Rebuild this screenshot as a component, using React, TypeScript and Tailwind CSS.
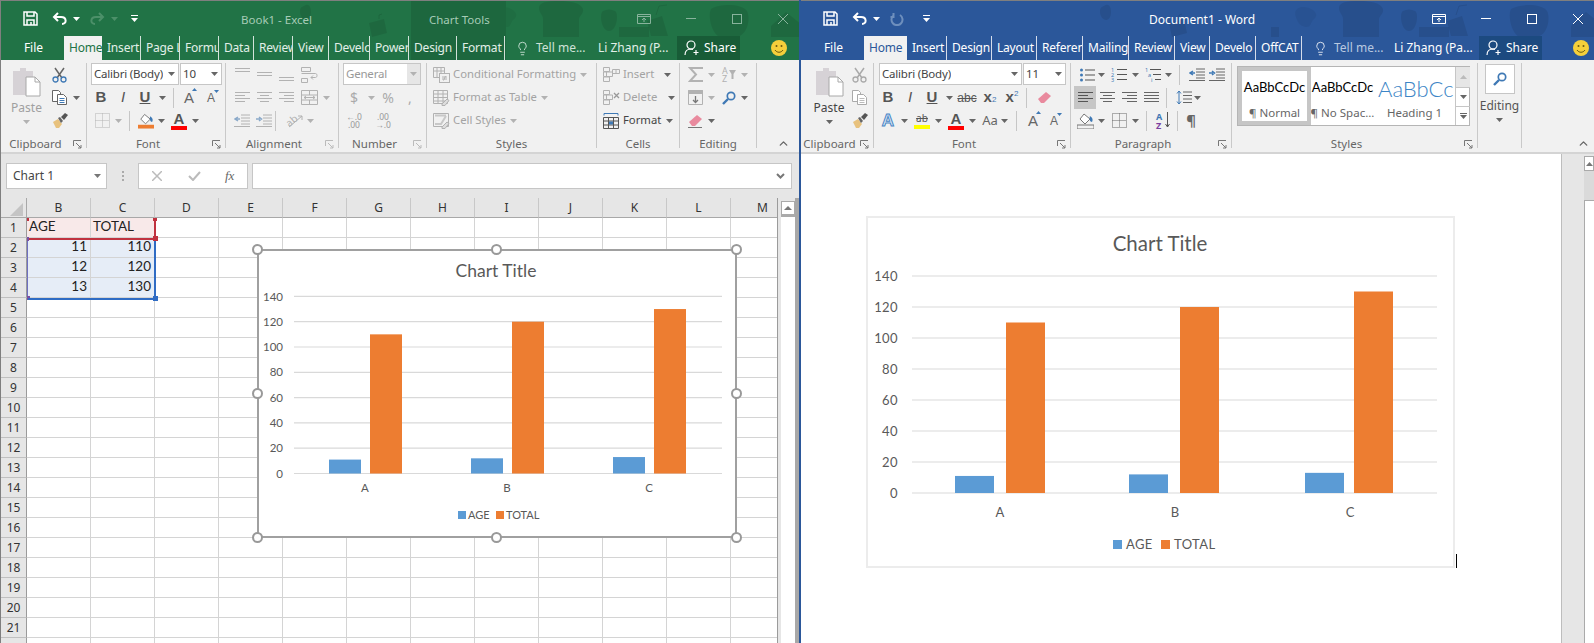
import { ReactNode } from "react";
import { ChevronUp, Lightbulb } from "lucide-react";
import clsx from "clsx";

const GREY = "#b2b2b2";
const DARK = "#666666";

const Caret = ({ c = DARK }: { c?: string }) => (
  <svg width="7" height="4" viewBox="0 0 7 4"><path d="M0 0h7L3.5 4z" fill={c} /></svg>
);

const Cell = ({ className, children }: { className?: string; children?: ReactNode }) => (
  <div className={clsx("flex h-[22px] shrink-0 items-center justify-center", className)}>{children}</div>
);

const Sep = ({ className }: { className?: string }) => <div className={clsx("h-[20px] w-px shrink-0 bg-[#c6c6c6]", className)} />;

const Row = ({ className, children }: { className?: string; children?: ReactNode }) => (
  <div className={clsx("flex h-[23px] items-center", className)}>{children}</div>
);

const Launcher = ({ c = "#777" }: { c?: string }) => (
  <svg className="absolute bottom-[-1px] right-[4px]" width="9" height="9" viewBox="0 0 9 9" fill="none" stroke={c}>
    <path d="M.5 6V.5H8M3 3l5 5M8 5v3H5" />
  </svg>
);

const Group = ({ className, label, launcher = true, dim, children }: { className: string; label: string; launcher?: boolean; dim?: boolean; children?: ReactNode }) => (
  <div className={clsx("relative mt-[3px] flex h-[85px] shrink-0 flex-col border-r border-[#c9c9c9]", className)}>
    <div className="h-[74px] shrink-0">{children}</div>
    <div className={clsx("shrink-0 text-center text-[11.5px] leading-[14px] text-[#666]", launcher && "pr-[16px]")}>{label}</div>
    {launcher && <Launcher c={dim ? "#bbb" : "#777"} />}
  </div>
);

const Combo = ({ className, text, c = "#444", arrow = DARK, boxed }: { className: string; text: string; c?: string; arrow?: string; boxed?: boolean }) => (
  <div className={clsx("flex h-[22px] shrink-0 items-center justify-between border border-[#c6c6c6] bg-white pl-[2px] font-['Noto_Sans',sans-serif] text-[11.5px] tracking-[-0.2px]", className)} style={{ color: c }}>
    <span className="overflow-hidden whitespace-nowrap">{text}</span>
    <span className={clsx("flex h-full w-[13px] shrink-0 items-center justify-center", boxed && "bg-[#e6e6e6]")}><Caret c={arrow} /></span>
  </div>
);

/* ---------- icons ---------- */
const Save = ({ c }: { c: string }) => (
  <svg width="15" height="15" viewBox="0 0 15 15" fill="none" stroke={c} strokeWidth="1.5">
    <path d="M1 1h11l2 2v11H1z" /><path d="M4 1v4h7V1M4 14V9h7v5" /><path d="M8 11v3" />
  </svg>
);
const Undo = ({ c }: { c: string }) => (
  <svg width="15" height="13" viewBox="0 0 15 13" fill="none" stroke={c} strokeWidth="2">
    <path d="M6 1 2 5l4 4M2 5h7c6 0 6 7 1 7" />
  </svg>
);
const Redo = ({ c }: { c: string }) => (
  <svg width="15" height="13" viewBox="0 0 15 13" fill="none" stroke={c} strokeWidth="2">
    <path d="m9 1 4 4-4 4M13 5H6c-6 0-6 7-1 7" />
  </svg>
);
const Repeat = ({ c }: { c: string }) => (
  <svg width="14" height="14" viewBox="0 0 14 14" fill="none" stroke={c} strokeWidth="2">
    <path d="M4 3a5.5 5.5 0 1 0 6 0M3.5 1v4h-3" />
  </svg>
);
const QatMore = () => (
  <svg width="7" height="7" viewBox="0 0 7 7" fill="#fff"><path d="M0 0h7v1H0zM0 3h7L3.5 7z" /></svg>
);
const Paste = ({ c = "#d6d2d6" }: { c?: string }) => (
  <svg width="29" height="30" viewBox="0 0 29 30">
    <path d="M1 4h7V1h6v3h7v24H1z" fill={c} />
    <path d="M14 10h9l5 5v14H14z" fill="#fff" stroke="#a8a8a8" />
    <path d="M23 10v5h5" fill="none" stroke="#a8a8a8" />
  </svg>
);
const Scissors = ({ c, h }: { c: string; h: string }) => (
  <svg width="15" height="16" viewBox="0 0 15 16" fill="none">
    <path d="M3 1l7 10M12 1 5 11" stroke={c} strokeWidth="1.5" />
    <circle cx="3.5" cy="12.5" r="2.5" stroke={h} strokeWidth="1.3" /><circle cx="11.5" cy="12.5" r="2.5" stroke={h} strokeWidth="1.3" />
  </svg>
);
const Copy = ({ c, a = "#3f79b5" }: { c: string; a?: string }) => (
  <svg width="15" height="15" viewBox="0 0 15 15" fill="#fff" stroke={c}>
    <path d="M.5.5h6l2 2v9h-8z" /><path d="M5.5 4.5h6l3 3v7h-9z" />
    <path d="M7.5 8.5h5M7.5 10.5h5M7.5 12.5h5" stroke={a} />
  </svg>
);
const Painter = () => (
  <svg width="16" height="16" viewBox="0 0 16 16">
    <path d="M1 9 6 6l4 5-3 4H4z" fill="#e8c27e" /><path d="m6 5 2-1 3 4-2 2z" fill="#666" /><path d="m9 4 4-4 3 2-4 5z" fill="#555" />
  </svg>
);
const Dotted = ({ c }: { c: string }) => (
  <svg width="15" height="15" viewBox="0 0 15 15" fill="none" stroke={c} strokeDasharray="1 1"><path d="M.5.5h14v14H.5zM7.5.5v14M.5 7.5h14" /></svg>
);
const Bucket = ({ bar }: { bar: string }) => (
  <svg width="17" height="16" viewBox="0 0 17 16">
    <path d="m7 1 6 5-5 5-5-5z" fill="#fff" stroke="#777" /><path d="M13 3c3 2 3 4 2 6-2 0-3-3-2-6z" fill="#3f79b5" />
    <rect y="12" width="17" height="4" fill={bar} stroke={bar === "#f1f1f1" ? "#777" : "none"} />
  </svg>
);
const LetterBar = ({ bar, c = "#555" }: { bar: string; c?: string }) => (
  <div className="flex w-[16px] flex-col items-center">
    <span className="font-['Liberation_Sans',sans-serif] text-[15px] font-bold leading-[13px]" style={{ color: c }}>A</span>
    <span className="mt-[1px] h-[4px] w-[16px]" style={{ background: bar }} />
  </div>
);
const Grow = ({ up, big }: { up: boolean; big: boolean }) => (
  <div className="relative flex w-[16px] justify-center">
    <span className={clsx("font-['Liberation_Sans',sans-serif] leading-none text-[#666]", big ? "text-[15px]" : "text-[12px]")}>A</span>
    <svg className="absolute right-0 top-[-2px]" width="5" height="3" viewBox="0 0 5 3"><path d={up ? "M0 3h5L2.5 0z" : "M0 0h5L2.5 3z"} fill="#3f79b5" /></svg>
  </div>
);
const Lines = ({ c, rows }: { c: string; rows: [number, number, number][] }) => (
  <svg width="15" height="15" viewBox="0 0 15 15" fill={c}>
    {rows.map(([y, x, w]) => <rect key={y} x={x} y={y} width={w} height="1" />)}
  </svg>
);
const L_TOP: [number, number, number][] = [[1, 0, 15], [4, 0, 15]];
const L_MID: [number, number, number][] = [[5, 0, 15], [8, 0, 15]];
const L_BOT: [number, number, number][] = [[10, 0, 15], [13, 0, 15]];
const L_LEFT: [number, number, number][] = [[2, 0, 15], [5, 0, 10], [8, 0, 15], [11, 0, 10]];
const L_CENTER: [number, number, number][] = [[2, 0, 15], [5, 3, 9], [8, 0, 15], [11, 3, 9]];
const L_RIGHT: [number, number, number][] = [[2, 0, 15], [5, 5, 10], [8, 0, 15], [11, 5, 10]];
const L_JUST: [number, number, number][] = [[2, 0, 15], [5, 0, 15], [8, 0, 15], [11, 0, 15]];
const Wrap = ({ c }: { c: string }) => (
  <svg width="17" height="16" viewBox="0 0 17 16" fill="none" stroke={c}><path d="M.5.5h9v4h-9zM.5 6.5h14c2 0 2 4 0 4H10m2-2-2 2 2 2M.5 11.5h6v4h-6z" /></svg>
);
const Merge = ({ c }: { c: string }) => (
  <svg width="17" height="15" viewBox="0 0 17 15" fill="none" stroke={c}><path d="M.5.5h16v14H.5zM.5 5h16M.5 10h16M8.5.5V5M8.5 10v4.5M3 7.5h11M5 6 3 7.5 5 9M12 6l2 1.5L12 9" /></svg>
);
const Indent = ({ c, a = "#8aa9c9", inc }: { c: string; a?: string; inc?: boolean }) => (
  <svg width="16" height="13" viewBox="0 0 16 13" fill="none">
    <path d="M7 1h9M7 4h9M7 7h9M7 10h9M0 12.5h16" stroke={c} />
    <path d={inc ? "M0 5h4M3 3l2.5 2L3 7" : "M6 5H2M4 3 1 5l3 2"} stroke={a} strokeWidth="1.5" />
  </svg>
);
const Orient = ({ c }: { c: string }) => (
  <svg width="18" height="15" viewBox="0 0 18 15" fill="none" stroke={c}>
    <text x="0" y="11" fontSize="10" fill={c} stroke="none" transform="rotate(-40 6 8)">ab</text>
    <path d="M3 14 16 3m-4 0h4v4" />
  </svg>
);
const Cond = ({ c, a }: { c: string; a: string }) => (
  <svg width="17" height="16" viewBox="0 0 17 16" fill="none" stroke={c}>
    <path d="M.5.5h11v10H.5zM.5 4h11M4 .5v10M8 .5v10" /><rect x="6.5" y="6.5" width="10" height="9" fill="#f1f1f1" />
    <path d="M9 10h5M9 12h5M12.5 9l-2 4.5" stroke={a} />
  </svg>
);
const TableI = ({ c }: { c: string }) => (
  <svg width="17" height="16" viewBox="0 0 17 16" fill="none" stroke={c}>
    <path d="M.5.5h14v13H.5zM.5 4h14M.5 7.5h14M.5 11h14M5 .5v13M10 .5v13" />
    <path d="m9 14 5-5 2 1.5-4 5H9z" fill="#ddd" />
  </svg>
);
const CellStyle = ({ c }: { c: string }) => (
  <svg width="17" height="16" viewBox="0 0 17 16" fill="none" stroke={c}>
    <path d="M.5.5h15v13H.5z" /><path d="M2 2.5h11M2 11h6L13 3" stroke="#c8c8c8" strokeWidth="2" />
    <path d="m9 14 5-5 2 1.5-4 5H9z" fill="#ddd" />
  </svg>
);
const CellsIc = ({ c, x }: { c: string; x?: boolean }) => (
  <svg width="17" height="15" viewBox="0 0 17 15" fill="none" stroke={c}>
    <path d="M.5.5h6v4h-6zM.5 5h9v4.500h-9zM.5 10h6v4.500h-6zM3.500 5v4.500" />
    {x ? <path d="m11 3 5 5m0-5-5 5" stroke="#999" strokeWidth="1.3" /> : <path d="M9.500 2.500h7v4h-7zM13 2.500v4" />}
  </svg>
);
const FormatCells = () => (
  <svg width="17" height="16" viewBox="0 0 17 16" fill="none" stroke="#555">
    <path d="M1 .5h14M1 .5v2M15 .5v2" stroke="#3f79b5" />
    <path d="M.5 4.500h15v11H.5zM.5 8h15M.5 12h15M5.500 4.500v11M10.500 4.500v11" />
    <rect x="6" y="8.5" width="4" height="3" fill="#3f79b5" stroke="none" />
  </svg>
);
const Sigma = ({ c }: { c: string }) => (
  <svg width="15" height="15" viewBox="0 0 15 15" fill="none" stroke={c} strokeWidth="2"><path d="M15 1H2l6 6.500L2 14h13" /></svg>
);
const SortAZ = ({ c }: { c: string }) => (
  <div className="relative h-[16px] w-[14px] text-[9px] leading-[8px]" style={{ color: c }}>
    <div>A</div><div>Z</div>
    <svg className="absolute right-0 top-[3px]" width="7" height="9" viewBox="0 0 7 9" fill={c}><path d="M0 0h7L4.5 4v5h-2V4z" /></svg>
  </div>
);
const FillDown = ({ c }: { c: string }) => (
  <svg width="15" height="15" viewBox="0 0 15 15" fill="none" stroke={c}><path d="M.5.5h14v14H.5z" /><path d="M.5.5h14v3H.5z" fill={c} /><path d="M7.5 6v6M5 10l2.500 2.500L10 10" stroke="#777" strokeWidth="1.3" /></svg>
);
const Find = () => (
  <svg width="14" height="14" viewBox="0 0 14 14" fill="none"><circle cx="9" cy="5" r="3.7" stroke="#3f79b5" strokeWidth="1.7" /><path d="M6 8 1 13" stroke="#3f79b5" strokeWidth="2.4" /></svg>
);
const Eraser = ({ line = true }: { line?: boolean }) => (
  <svg width="15" height="15" viewBox="0 0 15 15"><path d="m1 9 8-7 5 4-7 7H4z" fill="#e98a9e" />{line && <path d="M0 14.5h14" stroke="#777" />}</svg>
);
const Smiley = () => (
  <svg width="16" height="16" viewBox="0 0 16 16">
    <circle cx="8" cy="8" r="8" fill="#f5cf3b" /><circle cx="5.5" cy="6" r="1" fill="#6a5a10" /><circle cx="10.5" cy="6" r="1" fill="#6a5a10" />
    <path d="M4 10c2 3 6 3 8 0" fill="none" stroke="#6a5a10" />
  </svg>
);
const Person = () => (
  <svg width="16" height="16" viewBox="0 0 16 16" fill="none" stroke="#fff" strokeWidth="1.2">
    <circle cx="7" cy="5" r="4" /><path d="M1 15c0-4 2-6 6-6l2 .5M12 10v5M9.500 12.500h5" />
  </svg>
);
const Pattern = () => (
  <svg className="absolute left-0 top-0" width="800" height="36" viewBox="0 0 800 36" fill="#000" fillOpacity="0.09">
    <path d="M303 5c4-3 7 0 7 6s-3 8-5 8-6-3-6-8 2-5 4-6z" />
    <path d="M368 22l15-4 3 14-15 4z" /><path d="M378 18v-4l3-1" fill="none" stroke="#000" strokeOpacity=".1" />
    <path d="M496 8c5-4 15-1 18 3s0 6-2 8-2 7-6 7-8-2-10-7-3-8 0-11z" fillOpacity=".05" />
    <path d="M470 26h8v10h-8z" />
    <path d="M538 7c0-6 8-7 20-7s22 2 24 8c1 5-4 7-4 10v18h-36V18c0-4-4-6-4-11z" />
    <path d="M602 10c4-2 8-2 12 0s2 20-6 20-10-18-6-20z" />
    <path d="M646 20l15-5 6 20H650z" /><path d="M655 14l3-9 8-1" fill="none" stroke="#000" strokeOpacity=".09" />
    <path d="M618 26h30v10h-30z" />
    <path d="M710 8c8-5 30-6 36 2 4 8 0 26-12 26h-14c-8 0-14-20-10-28z" />
    <path d="M770 25l15-14 15 12v13h-30z" />
  </svg>
);
const DisplayMode = ({ c }: { c: string }) => (
  <svg width="14" height="10" viewBox="0 0 14 10" fill="none" stroke={c}><path d="M.5.5h13v9H.5zM.5 2.500h13M7 8V4M5 6l2-2 2 2" /></svg>
);

/* ---------- window frame ---------- */
const Tab = ({ className, label, active, color }: { className: string; label: string; active?: boolean; color?: string }) => (
  <div className={clsx("flex h-[24px] shrink-0 items-center overflow-hidden whitespace-nowrap pl-[5px] tracking-[-0.2px]", active ? "bg-[#f1f1f1]" : "", className)} style={active ? { color } : undefined}>
    {label}
  </div>
);

const Controls = ({ c }: { c: string }) => (
  <div className="flex items-center" style={{ color: c }}>
    <DisplayMode c={c} />
    <div className="ml-[35px] h-px w-[10px]" style={{ background: c }} />
    <div className="ml-[36px] h-[10px] w-[10px] border" style={{ borderColor: c }} />
    <svg className="ml-[36px]" width="10" height="10" viewBox="0 0 10 10" stroke={c}><path d="m0 0 10 10M10 0 0 10" /></svg>
  </div>
);

const Chevron = () => <ChevronUp size={13} strokeWidth={2.5} className="mt-[77px] shrink-0 text-[#666]" />;

/* ---------- chart ---------- */
type ChartProps = {
  w: number; h: number; x0: number; x1: number; y0: number; step: number; barW: number;
  bars: number[]; cats: number[]; axisX: number; catY: number; title: [number, number, number];
  legend: { y: number; sq: number; s: number; a: number; t: number; sq2: number; fs: number };
  fs: number; ls?: number;
};

const Chart = ({ w, h, x0, x1, y0, step, barW, bars, cats, axisX, catY, title, legend, fs, ls }: ChartProps) => {
  const age = [11, 12, 13];
  const total = [110, 120, 130];
  const unit = step / 20;
  return (
    <svg width={w} height={h} viewBox={`0 0 ${w} ${h}`} className="block font-['Lato',sans-serif]" fill="#595959">
      <text x={title[0]} y={title[1]} fontSize={title[2]} textAnchor="middle">Chart Title</text>
      {[0, 20, 40, 60, 80, 100, 120, 140].map((v, i) => (
        <g key={v}>
          <line x1={x0} x2={x1} y1={y0 - i * step} y2={y0 - i * step} stroke="#d9d9d9" strokeWidth="1.2" />
          <text x={axisX} y={y0 - i * step + fs * 0.36} fontSize={fs} textAnchor="end" letterSpacing={ls}>{v}</text>
        </g>
      ))}
      {[0, 1, 2].map((i) => (
        <g key={i}>
          <rect x={bars[i * 2]} y={y0 - age[i] * unit} width={barW} height={age[i] * unit} fill="#5b9bd5" />
          <rect x={bars[i * 2 + 1]} y={y0 - total[i] * unit} width={barW} height={total[i] * unit} fill="#ed7d31" />
          <text x={cats[i]} y={catY} fontSize={fs} textAnchor="middle">{"ABC"[i]}</text>
        </g>
      ))}
      <rect x={legend.sq} y={legend.y - legend.s} width={legend.s} height={legend.s} fill="#5b9bd5" />
      <text x={legend.a} y={legend.y} fontSize={legend.fs} letterSpacing={ls}>AGE</text>
      <rect x={legend.sq2} y={legend.y - legend.s} width={legend.s} height={legend.s} fill="#ed7d31" />
      <text x={legend.t} y={legend.y} fontSize={legend.fs} letterSpacing={ls}>TOTAL</text>
    </svg>
  );
};

const Handle = ({ className }: { className: string }) => (
  <div className={clsx("absolute h-[11px] w-[11px] rounded-full border-2 border-[#999] bg-white", className)} />
);

/* ---------- Excel ---------- */
const COLS = ["B", "C", "D", "E", "F", "G", "H", "I", "J", "K", "L", "M"];
const ROWS = Array.from({ length: 22 }, (_, i) => i + 1);
const DATA: Record<string, string> = { B1: "AGE", C1: "TOTAL", B2: "11", C2: "110", B3: "12", C3: "120", B4: "13", C4: "130" };

const Mark = ({ className }: { className: string }) => <div className={clsx("absolute", className)} />;

const Sheet = () => (
  <div className="relative h-full w-[777px] shrink-0 overflow-hidden border-r border-[#9b9b9b] bg-white font-['Lato',sans-serif] text-[13.5px] text-[#222]">
    <div className="grid grid-cols-[26px_repeat(12,64px)] grid-rows-[20px] auto-rows-[20px]">
      <div className="relative border-b border-r border-[#a8a8a8] bg-[#e6e6e6]">
        <svg className="absolute bottom-[1px] right-[3px]" width="13" height="13" viewBox="0 0 13 13"><path d="M13 0v13H0z" fill="#c4c4c4" /></svg>
      </div>
      {COLS.map((c) => (
        <div key={c} className="flex items-center justify-center border-b border-r border-b-[#a8a8a8] border-r-[#c8c8c8] bg-[#e6e6e6] font-['Noto_Sans',sans-serif] text-[12px] text-[#333]">{c}</div>
      ))}
      {ROWS.map((r) => (
        <div key={r} className="contents">
          <div className="flex items-center justify-center border-b border-r border-b-[#c0c0c0] border-r-[#9b9b9b] bg-[#e6e6e6] font-['Noto_Sans',sans-serif] text-[12px] text-[#333]">{r}</div>
          {COLS.map((c) => {
            const key = `${c}${r}`;
            const picked = (c === "B" || c === "C") && r <= 4;
            return (
              <div
                key={key}
                className={clsx(
                  "flex items-center overflow-hidden border-b border-r border-[#d4d4d4] pb-px pl-[2px] pr-[3px] leading-none",
                  r > 1 && "justify-end",
                  picked && (r === 1 ? "bg-[#f8e9e9]" : "bg-[#e6edf7]"),
                )}
              >
                {DATA[key]}
              </div>
            );
          })}
        </div>
      ))}
    </div>

    {/* range highlight */}
    <Mark className="left-[26px] top-[40px] h-[2px] w-[127px] bg-[#c0323f]" />
    <Mark className="left-[153px] top-[20px] h-[21px] w-[2px] bg-[#c0323f]" />
    <Mark className="left-[152px] top-[38px] h-[5px] w-[5px] bg-[#c0323f]" />
    <Mark className="left-[152px] top-[20px] h-[3px] w-[4px] bg-[#c0323f]" />
    <Mark className="left-[26px] top-[20px] h-[3px] w-[2px] bg-[#c0323f]" />
    <Mark className="left-[26px] top-[42px] h-[58px] w-px bg-[#6f6fc0]" />
    <Mark className="left-[26px] top-[39px] h-[4px] w-[2px] bg-[#7a4fa0]" />
    <Mark className="left-[26px] top-[98px] h-[4px] w-[3px] bg-[#7a4fa0]" />
    <Mark className="left-[153px] top-[43px] h-[57px] w-[2px] bg-[#2f6cc4]" />
    <Mark className="left-[27px] top-[100px] h-[2px] w-[127px] bg-[#2f6cc4]" />
    <Mark className="left-[152px] top-[98px] h-[5px] w-[5px] bg-[#2f6cc4]" />

    {/* chart sits on top of the cells */}
    <div className="absolute left-[256px] top-[51px] h-[289px] w-[480px] border-2 border-[#a0a0a0] bg-white">
      <div className="-m-[2px]">
        <Chart
          w={480} h={287} x0={37} x1={465} y0={224.5} step={25.3} barW={32}
          bars={[72, 113, 214, 255, 356, 397]} cats={[108, 250, 392]} axisX={26} catY={243}
          title={[239, 28, 17.5]} fs={11.5}
          legend={{ y: 270, s: 8, sq: 201, a: 211, sq2: 239, t: 249, fs: 11 }}
        />
      </div>
      <Handle className="-left-[7px] -top-[7px]" />
      <Handle className="left-[232px] -top-[7px]" />
      <Handle className="-right-[7px] -top-[7px]" />
      <Handle className="-left-[7px] top-[137px]" />
      <Handle className="-right-[7px] top-[137px]" />
      <Handle className="-bottom-[7px] -left-[7px]" />
      <Handle className="-bottom-[7px] left-[232px]" />
      <Handle className="-bottom-[7px] -right-[7px]" />
    </div>
  </div>
);

const ExcelRibbon = () => (
  <div className="flex h-[94px] shrink-0 border-b-2 border-[#d4d4d4] bg-[#f1f1f1]">
    <Group className="w-[86px]" label="Clipboard">
      <div className="flex">
        <div className="flex w-[51px] shrink-0 flex-col items-center pt-[4px]">
          <Paste />
          <div className="mt-[2px] text-[12px] leading-[18px] text-[#a0a0a0]">Paste</div>
          <div className="mt-[3px]"><Caret c={GREY} /></div>
        </div>
        <div className="flex flex-col">
          <Row><Scissors c="#666" h="#3f79b5" /></Row>
          <Row><Copy c="#666" /><span className="ml-[6px]"><Caret /></span></Row>
          <Row><Painter /></Row>
        </div>
      </div>
    </Group>

    <Group className="w-[139px]" label="Font">
      <div className="flex pl-[4px]">
        <Combo className="w-[88px]" text="Calibri (Body)" />
        <Combo className="ml-px w-[42px]" text="10" />
      </div>
      <Row className="mt-[1px] pl-[3px] font-['Liberation_Sans',sans-serif] text-[15px] text-[#555]">
        <Cell className="w-[22px] font-bold">B</Cell>
        <Cell className="w-[22px] italic">I</Cell>
        <Cell className="w-[22px] font-bold underline">U</Cell>
        <Cell className="w-[12px]"><Caret /></Cell>
        <Sep className="ml-[5px]" />
        <Cell className="ml-[6px] w-[18px]"><Grow up big /></Cell>
        <Cell className="ml-[4px] w-[18px]"><Grow up={false} big={false} /></Cell>
      </Row>
      <Row className="pl-[3px]">
        <Cell className="w-[24px]"><Dotted c={GREY} /></Cell>
        <Cell className="w-[8px]"><Caret c={GREY} /></Cell>
        <Sep className="ml-[7px]" />
        <Cell className="ml-[8px] w-[16px]"><Bucket bar="#ed7d31" /></Cell>
        <Cell className="ml-[3px] w-[8px]"><Caret /></Cell>
        <Cell className="ml-[6px] w-[16px]"><LetterBar bar="#ff0000" /></Cell>
        <Cell className="ml-[4px] w-[8px]"><Caret /></Cell>
      </Row>
    </Group>

    <Group className="w-[113px]" label="Alignment" dim>
      <Row className="pl-[5px]">
        <Cell className="w-[22px]"><Lines c={GREY} rows={L_TOP} /></Cell>
        <Cell className="w-[22px]"><Lines c={GREY} rows={L_MID} /></Cell>
        <Cell className="w-[22px]"><Lines c={GREY} rows={L_BOT} /></Cell>
        <Cell className="w-[24px]"><Wrap c={GREY} /></Cell>
      </Row>
      <Row className="pl-[5px]">
        <Cell className="w-[22px]"><Lines c={GREY} rows={L_LEFT} /></Cell>
        <Cell className="w-[22px]"><Lines c={GREY} rows={L_CENTER} /></Cell>
        <Cell className="w-[22px]"><Lines c={GREY} rows={L_RIGHT} /></Cell>
        <Cell className="w-[24px]"><Merge c={GREY} /></Cell>
        <Cell className="ml-px w-[8px]"><Caret c={GREY} /></Cell>
      </Row>
      <Row className="pl-[5px]">
        <Cell className="w-[22px]"><Indent c={GREY} /></Cell>
        <Cell className="w-[22px]"><Indent c={GREY} inc /></Cell>
        <Sep />
        <Cell className="ml-[8px] w-[22px]"><Orient c={GREY} /></Cell>
        <Cell className="w-[8px]"><Caret c={GREY} /></Cell>
      </Row>
    </Group>

    <Group className="w-[88px]" label="Number" dim>
      <div className="pl-[4px]">
        <Combo className="w-[78px]" text="General" c="#999" arrow={GREY} boxed />
      </div>
      <Row className="mt-[1px] pl-[4px] text-[14px] text-[#aaa]">
        <Cell className="w-[22px]">$</Cell>
        <Cell className="w-[12px]"><Caret c={GREY} /></Cell>
        <Cell className="w-[22px]">%</Cell>
        <Cell className="w-[22px]">,</Cell>
      </Row>
      <Row className="pl-[4px] text-[8.5px] leading-[8px] text-[#999]">
        <Cell className="w-[22px] flex-col"><span>←.0</span><span>.00</span></Cell>
        <Cell className="ml-[7px] w-[22px] flex-col"><span>.00</span><span>→.0</span></Cell>
      </Row>
    </Group>

    <Group className="w-[170px]" label="Styles" launcher={false}>
      <div className="pl-[6px] text-[11.3px] text-[#a3a3a3]">
        <Row><Cond c={GREY} a={GREY} /><span className="ml-[3px]">Conditional Formatting</span><span className="ml-[4px]"><Caret c={GREY} /></span></Row>
        <Row><TableI c={GREY} /><span className="ml-[3px]">Format as Table</span><span className="ml-[4px]"><Caret c={GREY} /></span></Row>
        <Row><CellStyle c={GREY} /><span className="ml-[3px]">Cell Styles</span><span className="ml-[4px]"><Caret c={GREY} /></span></Row>
      </div>
    </Group>

    <Group className="w-[83px]" label="Cells" launcher={false}>
      <div className="pl-[6px] text-[11.3px] text-[#a3a3a3]">
        <Row><CellsIc c={GREY} /><span className="ml-[3px] w-[41px]">Insert</span><Caret /></Row>
        <Row><CellsIc c={GREY} x /><span className="ml-[3px] w-[45px]">Delete</span><Caret /></Row>
        <Row className="text-[#444]"><FormatCells /><span className="ml-[3px] w-[43px]">Format</span><Caret /></Row>
      </div>
    </Group>

    <Group className="w-[77px]" label="Editing" launcher={false}>
      <div className="pl-[7px]">
        <Row>
          <Cell className="w-[16px]"><Sigma c={GREY} /></Cell>
          <Cell className="ml-[4px] w-[8px]"><Caret c={GREY} /></Cell>
          <Cell className="ml-[7px] w-[14px]"><SortAZ c={GREY} /></Cell>
          <Cell className="ml-[4px] w-[8px]"><Caret c={GREY} /></Cell>
        </Row>
        <Row>
          <Cell className="w-[16px]"><FillDown c={GREY} /></Cell>
          <Cell className="ml-[4px] w-[8px]"><Caret c={GREY} /></Cell>
          <Cell className="ml-[7px] w-[14px]"><Find /></Cell>
          <Cell className="ml-[4px] w-[8px]"><Caret /></Cell>
        </Row>
        <Row>
          <Cell className="w-[16px]"><Eraser /></Cell>
          <Cell className="ml-[4px] w-[8px]"><Caret /></Cell>
        </Row>
      </div>
    </Group>
    <div className="ml-[20px]"><Chevron /></div>
  </div>
);

const Excel = () => (
  <div className="flex h-full w-[799px] shrink-0 flex-col border-l border-[#7f7f7f] bg-[#e6e6e6]">
    <div className="relative h-[60px] shrink-0 overflow-hidden border-t border-[#7f7f7f] bg-[#217346] text-[12px] text-[#e2efe8]">
      <Pattern />
      <div className="absolute left-[410px] top-0 h-[60px] w-[95px] bg-[#1d673e]" />
      <div className="relative flex h-[35px] items-center">
        <span className="ml-[22px]"><Save c="#fff" /></span>
        <span className="ml-[14px]"><Undo c="#fff" /></span>
        <span className="ml-[6px]"><Caret c="#fff" /></span>
        <span className="ml-[10px]"><Redo c="#4c9069" /></span>
        <span className="ml-[6px]"><Caret c="#4c9069" /></span>
        <span className="ml-[13px]"><QatMore /></span>
        <span className="ml-[103px] mt-[3px] w-[188px] text-[11.5px] text-[#a6cbb6]">Book1 - Excel</span>
        <span className="mt-[3px] w-[70px] whitespace-nowrap text-[11.5px] text-[#a6cbb6]">Chart Tools</span>
        <span className="ml-[138px]"><Controls c="#88b39c" /></span>
      </div>
      <div className="relative flex h-[24px] items-center">
        <div className="flex w-[63px] shrink-0 justify-center pl-[2px] text-white">File</div>
        <Tab className="w-[38px] rounded-none" label="Home" active color="#217346" />
        <Tab className="w-[39px] border-r border-white/80" label="Insert" />
        <Tab className="w-[39px] border-r border-white/80" label="Page Layout" />
        <Tab className="w-[39px] border-r border-white/80" label="Formulas" />
        <Tab className="w-[35px] border-r border-white/80" label="Data" />
        <Tab className="w-[39px] border-r border-white/80" label="Review" />
        <Tab className="w-[36px] border-r border-white/80" label="View" />
        <Tab className="w-[41px] border-r border-white/80" label="Developer" />
        <Tab className="w-[39px] border-r border-white/80" label="Power Pivot" />
        <Tab className="w-[48px] border-r border-white/80" label="Design" />
        <Tab className="w-[48px] border-r border-white/80" label="Format" />
        <Lightbulb size={15} strokeWidth={1.3} className="ml-[10px] shrink-0" />
        <span className="ml-[6px] w-[62px] shrink-0 whitespace-nowrap text-[#cfe2d7]">Tell me...</span>
        <span className="w-[79px] shrink-0 whitespace-nowrap">Li Zhang (P...</span>
        <div className="flex h-[24px] w-[63px] shrink-0 items-center bg-[#185c37] pl-[7px] text-white">
          <Person /><span className="ml-[4px]">Share</span>
        </div>
        <span className="ml-[31px]"><Smiley /></span>
      </div>
    </div>
    <ExcelRibbon />

    <div className="flex h-[44px] shrink-0 items-center text-[12px]">
      <div className="ml-[5px] flex h-[26px] w-[101px] items-center justify-between border border-[#c6c6c6] bg-white pl-[6px] pr-[5px] text-[#444]">
        Chart 1<Caret c="#777" />
      </div>
      <div className="ml-[15px] flex flex-col gap-[2px]">
        <span className="h-[2px] w-[2px] bg-[#aaa]" /><span className="h-[2px] w-[2px] bg-[#aaa]" /><span className="h-[2px] w-[2px] bg-[#aaa]" />
      </div>
      <div className="ml-[14px] flex h-[26px] w-[110px] items-center border border-[#c6c6c6] bg-white">
        <svg className="ml-[13px]" width="10" height="10" viewBox="0 0 10 10" stroke="#bbb" strokeWidth="1.5"><path d="m0 0 10 10M10 0 0 10" /></svg>
        <svg className="ml-[26px]" width="13" height="10" viewBox="0 0 13 10" fill="none" stroke="#bbb" strokeWidth="2"><path d="m1 5 4 4 7-8" /></svg>
        <span className="ml-[24px] font-['Liberation_Serif',serif] text-[13px] italic text-[#666]">fx</span>
      </div>
      <div className="ml-[4px] flex h-[26px] w-[540px] items-center justify-end border border-[#c6c6c6] bg-white pr-[6px]">
        <svg width="9" height="6" viewBox="0 0 9 6" fill="none" stroke="#777" strokeWidth="2"><path d="m1 1 3.5 3.5L8 1" /></svg>
      </div>
    </div>

    <div className="flex min-h-0 flex-1">
      <div className="min-w-0">
        <Sheet />
      </div>
      <div className="ml-[3px] mt-[3px] flex h-full w-[14px] flex-col bg-white">
        <div className="flex h-[14px] items-center justify-center border border-[#aaa]"><svg width="8" height="4" viewBox="0 0 8 4"><path d="M0 4h8L4 0z" fill="#777" /></svg></div>
        <div className="h-[2px] bg-[#aaa]" />
      </div>
      <div className="ml-auto w-[4px] bg-[#a8a8a8]" />
    </div>
  </div>
);

/* ---------- Word ---------- */
const StyleItem = ({ className, sample, label, sampleClass }: { className: string; sample: string; label: string; sampleClass: string }) => (
  <div className={clsx("flex h-full shrink-0 flex-col items-center overflow-hidden", className)}>
    <div className={clsx("flex h-[34px] w-full items-center justify-center overflow-hidden whitespace-nowrap px-[4px] font-['Lato',sans-serif]", sampleClass)}>{sample}</div>
    <div className="whitespace-nowrap text-[11.5px] leading-[16px] text-[#666]">{label}</div>
  </div>
);

const WordRibbon = () => (
  <div className="flex h-[94px] shrink-0 border-b-2 border-[#d4d4d4] bg-[#f1f1f1]">
    <Group className="w-[73px] pl-[1px]" label="Clipboard">
      <div className="flex">
        <div className="flex w-[48px] shrink-0 flex-col items-center pt-[4px] pl-[6px]">
          <Paste />
          <div className="mt-[2px] text-[12px] leading-[18px] text-[#444]">Paste</div>
          <div className="mt-[3px]"><Caret /></div>
        </div>
        <div className="flex flex-col pl-[2px]">
          <Row><Scissors c="#aaa" h="#aaa" /></Row>
          <Row><Copy c="#aaa" a="#bbb" /></Row>
          <Row><Painter /></Row>
        </div>
      </div>
    </Group>

    <Group className="w-[197px]" label="Font">
      <div className="flex pl-[5px]">
        <Combo className="w-[143px]" text="Calibri (Body)" />
        <Combo className="ml-px w-[43px]" text="11" />
      </div>
      <Row className="mt-[1px] pl-[3px] font-['Liberation_Sans',sans-serif] text-[15px] text-[#555]">
        <Cell className="w-[22px] font-bold">B</Cell>
        <Cell className="w-[22px] italic">I</Cell>
        <Cell className="w-[22px] font-bold underline">U</Cell>
        <Cell className="w-[12px]"><Caret /></Cell>
        <Cell className="ml-[2px] w-[20px] text-[12px] line-through">abc</Cell>
        <Cell className="ml-[2px] w-[22px] font-bold">x<sub className="text-[8px] font-normal text-[#3f79b5]">2</sub></Cell>
        <Cell className="w-[22px] font-bold">x<sup className="text-[8px] font-normal text-[#3f79b5]">2</sup></Cell>
        <Sep className="ml-[3px]" />
        <Cell className="ml-[9px] w-[16px]"><Eraser line={false} /></Cell>
      </Row>
      <Row className="pl-[3px]">
        <Cell className="w-[22px] font-['Liberation_Sans',sans-serif] text-[17px] font-bold text-[#dbe8f5] [-webkit-text-stroke:1px_#4a86c5]">A</Cell>
        <Cell className="w-[10px]"><Caret /></Cell>
        <Cell className="ml-[5px] w-[16px]">
          <div className="flex flex-col items-center">
            <span className="text-[10px] leading-[11px] text-[#555] line-through">ab</span>
            <span className="mt-[1px] h-[4px] w-[16px] bg-[#ffff00]" />
          </div>
        </Cell>
        <Cell className="ml-[4px] w-[8px]"><Caret /></Cell>
        <Cell className="ml-[6px] w-[16px]"><LetterBar bar="#ff0000" /></Cell>
        <Cell className="ml-[4px] w-[8px]"><Caret /></Cell>
        <Cell className="ml-[6px] w-[16px] text-[13px] text-[#666]">Aa</Cell>
        <Cell className="ml-[2px] w-[8px]"><Caret /></Cell>
        <Sep className="ml-[8px]" />
        <Cell className="ml-[7px] w-[18px]"><Grow up big /></Cell>
        <Cell className="ml-[3px] w-[18px]"><Grow up={false} big={false} /></Cell>
      </Row>
    </Group>

    <Group className="w-[161px]" label="Paragraph">
      <Row className="pl-[7px]">
        <Cell className="w-[18px]">
          <svg width="15" height="14" viewBox="0 0 15 14" fill="#555"><circle cx="1.5" cy="2" r="1.5" fill="#3f79b5" /><circle cx="1.5" cy="7" r="1.5" fill="#3f79b5" /><circle cx="1.5" cy="12" r="1.5" fill="#3f79b5" /><path d="M5 1.500h10v1H5zM5 6.500h10v1H5zM5 11.500h10v1H5z" /></svg>
        </Cell>
        <Cell className="ml-px w-[8px]"><Caret /></Cell>
        <Cell className="ml-[6px] w-[16px]">
          <svg width="16" height="15" viewBox="0 0 16 15" fill="#555"><text x="0" y="5" fontSize="5.5" fill="#3f79b5">1</text><text x="0" y="10" fontSize="5.5" fill="#3f79b5">2</text><text x="0" y="15" fontSize="5.5" fill="#3f79b5">3</text><path d="M6 2h10v1H6zM6 7h10v1H6zM6 12h10v1H6z" /></svg>
        </Cell>
        <Cell className="ml-[4px] w-[8px]"><Caret /></Cell>
        <Cell className="ml-[6px] w-[16px]">
          <svg width="16" height="15" viewBox="0 0 16 15" fill="#555"><text x="0" y="5" fontSize="5.5" fill="#3f79b5">1</text><text x="3" y="10" fontSize="5.5" fill="#3f79b5">a</text><text x="6" y="15" fontSize="5.5" fill="#3f79b5">i</text><path d="M5 2h11v1H5zM8 7h8v1H8zM10 12h6v1h-6z" /></svg>
        </Cell>
        <Cell className="ml-[3px] w-[8px]"><Caret /></Cell>
        <Sep className="ml-[7px]" />
        <Cell className="ml-[9px] w-[16px]"><Indent c="#666" a="#3f79b5" /></Cell>
        <Cell className="ml-[4px] w-[16px]"><Indent c="#666" a="#3f79b5" inc /></Cell>
      </Row>
      <Row className="pl-[3px]">
        <Cell className="h-[23px] w-[22px] bg-[#c6c6c6]"><Lines c="#555" rows={L_LEFT} /></Cell>
        <Cell className="ml-[4px] w-[15px]"><Lines c="#666" rows={L_CENTER} /></Cell>
        <Cell className="ml-[7px] w-[15px]"><Lines c="#666" rows={L_RIGHT} /></Cell>
        <Cell className="ml-[7px] w-[15px]"><Lines c="#666" rows={L_JUST} /></Cell>
        <Sep className="ml-[7px]" />
        <Cell className="ml-[8px] w-[18px]">
          <svg width="16" height="15" viewBox="0 0 16 15" fill="none"><path d="M3 1v13M1 3.500 3 1l2 2.500M1 11.500 3 14l2-2.500" stroke="#3f79b5" /><path d="M7 2h9M7 5.500h9M7 9h9M7 12.500h9" stroke="#666" /></svg>
        </Cell>
        <Cell className="w-[8px]"><Caret /></Cell>
      </Row>
      <Row className="pl-[6px]">
        <Cell className="w-[17px]"><Bucket bar="#f1f1f1" /></Cell>
        <Cell className="ml-[3px] w-[8px]"><Caret /></Cell>
        <Cell className="ml-[7px] w-[15px]"><Dotted c="#666" /></Cell>
        <Cell className="ml-[4px] w-[8px]"><Caret /></Cell>
        <Sep className="ml-[7px]" />
        <Cell className="ml-[9px] w-[14px]">
          <div className="relative h-[17px] w-[14px] text-[9px] font-bold leading-[9px]">
            <div className="text-[#3f79b5]">A</div><div className="text-[#7a3fa0]">Z</div>
            <svg className="absolute right-0 top-0" width="5" height="16" viewBox="0 0 5 16" fill="none" stroke="#555"><path d="M2.500 0v15M.5 12l2 3 2-3" /></svg>
          </div>
        </Cell>
        <Sep className="ml-[7px]" />
        <Cell className="ml-[8px] w-[10px] text-[15px] font-bold text-[#666]">¶</Cell>
      </Row>
    </Group>

    <Group className="w-[246px]" label="Styles">
      <div className="ml-[5px] mt-[3px] flex h-[60px] w-[233px] border border-[#b5b5b5] bg-white">
        <StyleItem className="w-[73px] border-[4px] border-[#c6c6c6]" sample="AaBbCcDc" label="¶ Normal" sampleClass="text-[13px] text-black" />
        <StyleItem className="w-[63px] pt-[4px]" sample="AaBbCcDc" label="¶ No Spac..." sampleClass="text-[13px] text-black" />
        <StyleItem className="w-[81px] pt-[4px]" sample="AaBbCcDd" label="Heading 1" sampleClass="justify-start text-[22px] font-light text-[#3c85c6]" />
        <div className="flex w-[15px] shrink-0 flex-col border-l border-[#c6c6c6]">
          <div className="flex h-[21px] items-center justify-center border-b border-[#c6c6c6] bg-[#e6e6e6]"><svg width="7" height="4" viewBox="0 0 7 4"><path d="M0 4h7L3.5 0z" fill="#bbb" /></svg></div>
          <div className="flex h-[19px] items-center justify-center border-b border-[#c6c6c6]"><Caret /></div>
          <div className="flex flex-1 flex-col items-center justify-center gap-[1px]"><span className="h-px w-[7px] bg-[#666]" /><Caret /></div>
        </div>
      </div>
    </Group>

    <Group className="w-[44px]" label="" launcher={false}>
      <div className="flex flex-col items-center">
        <div className="mt-px flex h-[30px] w-[30px] items-center justify-center border border-[#c6c6c6] bg-white"><Find /></div>
        <div className="mt-[3px] text-[12px] leading-[18px] text-[#555]">Editing</div>
        <div className="mt-[3px]"><Caret /></div>
      </div>
    </Group>
    <div className="ml-auto pr-[4px]"><Chevron /></div>
  </div>
);

const Word = () => (
  <div className="flex h-full min-w-0 flex-1 flex-col border-l-2 border-[#2b579a] bg-white">
    <div className="relative h-[60px] shrink-0 overflow-hidden border-t border-[#7f7f7f] bg-[#2b579a] text-[12px] text-white">
      <Pattern />
      <div className="relative flex h-[35px] items-center">
        <span className="ml-[22px]"><Save c="#fff" /></span>
        <span className="ml-[14px]"><Undo c="#fff" /></span>
        <span className="ml-[6px]"><Caret c="#fff" /></span>
        <span className="ml-[10px]"><Repeat c="#6e8fbd" /></span>
        <span className="ml-[19px]"><QatMore /></span>
        <span className="ml-[219px] mt-[3px] w-[283px] whitespace-nowrap">Document1 - Word</span>
        <Controls c="#fff" />
      </div>
      <div className="relative flex h-[24px] items-center">
        <div className="flex w-[63px] shrink-0 justify-center pl-[2px]">File</div>
        <Tab className="w-[43px] pl-[5px]" label="Home" active color="#2b579a" />
        <Tab className="w-[40px] border-r border-white/80" label="Insert" />
        <Tab className="w-[45px] border-r border-white/80" label="Design" />
        <Tab className="w-[45px] border-r border-white/80" label="Layout" />
        <Tab className="w-[46px] border-r border-white/80" label="References" />
        <Tab className="w-[46px] border-r border-white/80" label="Mailings" />
        <Tab className="w-[46px] border-r border-white/80" label="Review" />
        <Tab className="w-[35px] border-r border-white/80" label="View" />
        <Tab className="w-[46px] border-r border-white/80" label="Develo" />
        <Tab className="w-[46px] border-r border-white/80" label="OffCAT" />
        <Lightbulb size={15} strokeWidth={1.3} className="ml-[11px] shrink-0" />
        <span className="ml-[6px] w-[60px] shrink-0 whitespace-nowrap text-[#b9c9e0]">Tell me...</span>
        <span className="w-[85px] shrink-0 whitespace-nowrap">Li Zhang (Pa...</span>
        <div className="flex h-[24px] w-[63px] shrink-0 items-center bg-[#1c4a80] pl-[7px]">
          <Person /><span className="ml-[4px]">Share</span>
        </div>
        <span className="ml-[31px]"><Smiley /></span>
      </div>
    </div>
    <WordRibbon />

    <div className="flex min-h-0 flex-1">
      <div className="min-w-0 flex-1 border-r border-[#bdbdbd] pl-[65px] pt-[62px]">
        <div className="flex items-end">
          <div className="h-[352px] w-[589px] border-2 border-[#ececec]">
            <div className="-m-[2px]">
              <Chart
                w={589} h={352} x0={46} x1={571} y0={277} step={31} barW={39}
                bars={[89, 140, 263, 314, 439, 488]} cats={[134, 309, 484]} axisX={32} catY={301}
                title={[294, 35, 20.5]} fs={13} ls={0.4}
                legend={{ y: 333, s: 9, sq: 247, a: 260, sq2: 295, t: 308, fs: 13 }}
              />
            </div>
          </div>
          <div className="ml-[1px] h-[14px] w-px bg-black" />
        </div>
      </div>
      <div className="flex w-[32px] shrink-0 bg-[#e6e6e6] pl-[22px] pt-[2px]">
        <div className="flex w-[10px] flex-col">
          <div className="flex h-[15px] items-center justify-center border border-[#aaa] bg-white"><svg width="7" height="4" viewBox="0 0 7 4"><path d="M0 4h7L3.5 0z" fill="#777" /></svg></div>
          <div className="h-[29px] bg-[#dadada]" />
          <div className="flex-1 border-l border-t border-[#aaa] bg-white" />
        </div>
      </div>
    </div>
  </div>
);

export default function App() {
  return (
    <div className="flex h-[643px] w-[1594px] overflow-hidden bg-white font-['Noto_Sans',sans-serif]">
      <Excel />
      <Word />
    </div>
  );
}
